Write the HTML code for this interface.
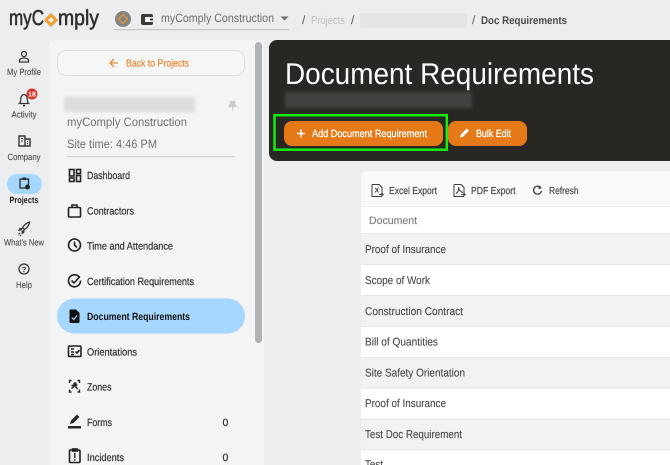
<!DOCTYPE html>
<html><head><meta charset="utf-8"><style>
html,body{margin:0;padding:0;width:670px;height:465px;overflow:hidden;background:#ebedef}
svg{display:block;filter:blur(.25px)}
text{font-family:"Liberation Sans",sans-serif;text-rendering:geometricPrecision}
.m{font-size:10.5px;fill:#2f3336;stroke:#2f3336;stroke-width:.2}
.r{font-size:9px;fill:#4a4e51;stroke:#4a4e51;stroke-width:.1;text-anchor:middle}
.t{font-size:11.3px;fill:#45494c;stroke:#45494c;stroke-width:.1}
.b{font-size:10.2px;fill:#45494c;stroke:#45494c;stroke-width:.2}
.w{font-size:10.5px;fill:#fff;stroke:#fff;stroke-width:.25}
.i{fill:none;stroke:#1f2224;stroke-width:1.600}
</style></head><body>
<svg width="670" height="465" viewBox="0 0 670 465" xmlns="http://www.w3.org/2000/svg">
<defs>
<filter id="bl" x="-10%" y="-40%" width="120%" height="180%"><feGaussianBlur stdDeviation="1.500"/></filter>
</defs>
<rect width="670" height="465" fill="#ebedef"/>

<!-- top bar -->
<text x="9" y="25" font-size="21.500" fill="#2e2e2e" stroke="#2e2e2e" stroke-width=".55" textLength="35" lengthAdjust="spacingAndGlyphs">myC</text>
<path d="M51 15l5 5-5 5-5-5z" fill="none" stroke="#f0a030" stroke-width="3"/>
<text x="58" y="25" font-size="21.500" fill="#2e2e2e" stroke="#2e2e2e" stroke-width=".55" textLength="41" lengthAdjust="spacingAndGlyphs">mply</text>
<circle cx="123" cy="19" r="8" fill="#85837f"/>
<path d="M123 14.500l4.500 4.500-4.500 4.500-4.500-4.500z" fill="none" stroke="#d99a3a" stroke-width="1.300"/>
<rect x="141" y="14" width="12" height="11" rx="2" fill="#3a3a3a"/>
<rect x="145" y="17" width="8" height="5" fill="#f4f4f4"/>
<rect x="150" y="18.500" width="3" height="2" fill="#3a3a3a"/>
<text x="161" y="22" font-size="12" fill="#6b6f72" textLength="113" lengthAdjust="spacingAndGlyphs">myComply Construction</text>
<path d="M280.500 16.500h8l-4 4z" fill="#6b6f72"/>
<rect x="114" y="29" width="175" height="1.200" fill="#c4c8cb"/>
<text x="302" y="24" font-size="12" fill="#55595c">/</text>
<text x="311" y="24" font-size="11.500" fill="#bdc0c3" textLength="34" lengthAdjust="spacingAndGlyphs">Projects</text>
<text x="351" y="24" font-size="12" fill="#55595c">/</text>
<rect x="360" y="13" width="107" height="15" rx="2" fill="#e3e5e7"/>
<text x="472" y="24" font-size="12" fill="#55595c">/</text>
<text x="481" y="24" font-size="11" font-weight="bold" fill="#474b4e" textLength="86" lengthAdjust="spacingAndGlyphs">Doc Requirements</text>

<!-- left rail -->
<g fill="none" stroke="#33373a" stroke-width="1.300">
<circle cx="24" cy="54" r="2.500"/><path d="M19.500 62v-1.500c0-1.500 2-2.500 4.500-2.500s4.500 1 4.500 2.500V62z"/>
<path d="M19.500 103.500c1.500-1.500 1-3.500 1.500-6 .5-2 2-3 3-3s2.500 1 3 3c.5 2.500 0 4.500 1.500 6z"/><path d="M23 105.500h2" stroke-width="1.500"/>
</g>
<circle cx="32" cy="94" r="5.500" fill="#d8352a"/>
<text x="32" y="96.500" font-size="7" fill="#fff" text-anchor="middle" font-weight="bold">18</text>
<path d="M19 146v-10h6v10zM25 146v-7h5v7z" fill="none" stroke="#33373a" stroke-width="1.400"/>
<path d="M21 138.500h2M21 141h2M27 141.500h1M27 143.500h1" stroke="#33373a"/>
<rect x="7" y="174" width="35" height="20" rx="10" fill="#a6d7ff"/>
<path d="M20 179h8.500v9h-8.500z" fill="none" stroke="#26292b" stroke-width="1.300"/><rect x="22.500" y="177.500" width="3.500" height="2.500" fill="#26292b"/><circle cx="27.500" cy="187" r="2.500" fill="#26292b"/>
<path d="M22.500 228c1.500-3 4-5 7-6-.5 3.500-2.500 6-5 7.500z" fill="none" stroke="#33373a" stroke-width="1.300"/>
<path d="M22.500 228l-3 .5-1 2 3-.2M24.500 229.500l-.5 3-2 1.500-.2-3" fill="#33373a" stroke="#33373a" stroke-width=".6"/>
<path d="M20 233l-1.500 1.500M21 235l-1 1" stroke="#33373a" stroke-width="1.200"/>
<circle cx="24" cy="269" r="5" fill="none" stroke="#33373a" stroke-width="1.300"/>
<text x="24" y="272" font-size="7.500" font-weight="bold" fill="#33373a" text-anchor="middle">?</text>
<text class="r" x="24" y="75" textLength="34" lengthAdjust="spacingAndGlyphs">My Profile</text>
<text class="r" x="24" y="117.500" textLength="25" lengthAdjust="spacingAndGlyphs">Activity</text>
<text class="r" x="24" y="160" textLength="33" lengthAdjust="spacingAndGlyphs">Company</text>
<text class="r" x="24" y="203" font-weight="bold" style="fill:#222;stroke:none" textLength="29" lengthAdjust="spacingAndGlyphs">Projects</text>
<text class="r" x="24" y="245.500" textLength="40" lengthAdjust="spacingAndGlyphs">What's New</text>
<text class="r" x="24" y="288" textLength="16" lengthAdjust="spacingAndGlyphs">Help</text>

<!-- side panel -->
<path d="M56 40H264V465H49V47a7 7 0 0 1 7-7z" fill="#f3f4f6"/>
<rect x="255" y="42" width="7" height="301" rx="3.500" fill="#b1b4b6"/>
<rect x="57.500" y="50.500" width="187" height="25" rx="9" fill="#f5f6f7" stroke="#dcdfe1"/>
<path d="M118 63h-7.500M114 59l-4 4 4 4" fill="none" stroke="#ec8a33" stroke-width="1.300"/>
<text x="126" y="66.500" font-size="10.300" fill="#e98731" stroke="#e98731" stroke-width=".2" textLength="63" lengthAdjust="spacingAndGlyphs">Back to Projects</text>
<rect x="64" y="97" width="131" height="15" fill="#dadcde" filter="url(#bl)"/>
<path d="M229 103h7l-1-1v-1h-5v1zM230 103l-2 4h9l-2-4zM232 107h1.400l-.7 6z" fill="#c9cbcd"/>
<text x="67" y="126" font-size="12.200" fill="#6d7174" textLength="120" lengthAdjust="spacingAndGlyphs">myComply Construction</text>
<text x="67" y="148" font-size="12.200" fill="#6d7174" textLength="90" lengthAdjust="spacingAndGlyphs">Site time: 4:46 PM</text>
<rect x="67" y="156" width="168" height="1.200" fill="#d3d6d8"/>
<rect x="57" y="298.500" width="188" height="35" rx="17.500" fill="#a6d7ff"/>

<!-- menu icons -->
<g class="i">
<rect x="69.500" y="169.500" width="4.500" height="6.500"/><rect x="76.500" y="169.500" width="4" height="4"/><rect x="69.500" y="178" width="4.500" height="3.500"/><rect x="76.500" y="175.500" width="4" height="6"/>
<rect x="68.500" y="207.500" width="12" height="9.500" rx="1"/><path d="M72 207.500v-2.500h5v2.500"/>
<circle cx="74.500" cy="245" r="6"/><path d="M74.500 241.500v3.500l2.500 2.500"/>
<path d="M79.500 277.500a6 6 0 1 0 1 3"/><path d="M71.500 280.500l2.500 2.500 6-6.500"/>
<rect x="68.500" y="346" width="12.500" height="10.500" rx="1"/><path d="M71 349h3M71 352h3M71 354.500h3M75.500 351.500l1.500 1.500 2.500-3"/>
<path d="M71.500 380.500h-2v2.500M77.500 380.500h2v2.500M71.500 392h-2v-2.500M77.500 392h2v-2.500" stroke-width="1.400"/>
<rect x="69.500" y="450" width="10.500" height="12.500" rx="1"/><rect x="72.500" y="449" width="4.500" height="2" fill="#26292b"/>
</g>
<path d="M69.500 310.500a1 1 0 0 1 1-1h5.500l3.500 3.500V322a1 1 0 0 1-1 1h-8a1 1 0 0 1-1-1z" fill="#111"/>
<path d="M71.800 317.500l2 2 3.300-4" fill="none" stroke="#a6d7ff" stroke-width="1.200"/>
<circle cx="75" cy="384" r="1.700" fill="#26292b"/><path d="M74.500 386l-3 2.500M75 386l2.500 3M71.500 385.500l6-.5" stroke="#26292b" stroke-width="1.500" fill="none"/>
<rect x="68" y="426" width="13" height="2.500" fill="#26292b"/>
<path d="M70 424l1-3.500 6-6 2.500 2.500-6 6z" fill="#26292b"/>
<path d="M74.800 453v5M74.800 459.300v1.500" stroke="#26292b" stroke-width="1.400"/>

<text class="m" x="87" y="179" textLength="43" lengthAdjust="spacingAndGlyphs">Dashboard</text>
<text class="m" x="87" y="214.500" textLength="47" lengthAdjust="spacingAndGlyphs">Contractors</text>
<text class="m" x="87" y="249.500" textLength="86" lengthAdjust="spacingAndGlyphs">Time and Attendance</text>
<text class="m" x="87" y="285" textLength="107" lengthAdjust="spacingAndGlyphs">Certification Requirements</text>
<text class="m" x="87" y="320" font-weight="bold" style="fill:#111;stroke:none" textLength="103" lengthAdjust="spacingAndGlyphs">Document Requirements</text>
<text class="m" x="87" y="355.500" textLength="50" lengthAdjust="spacingAndGlyphs">Orientations</text>
<text class="m" x="87" y="390.500" textLength="24.500" lengthAdjust="spacingAndGlyphs">Zones</text>
<text class="m" x="87" y="426" textLength="25" lengthAdjust="spacingAndGlyphs">Forms</text>
<text class="m" x="87" y="461" textLength="37" lengthAdjust="spacingAndGlyphs">Incidents</text>
<text class="m" x="222.500" y="426">0</text>
<text class="m" x="222.500" y="461">0</text>

<!-- dark header -->
<path d="M277 40H670V161H277a8 8 0 0 1-8-8V48a8 8 0 0 1 8-8z" fill="#282723"/>
<text x="285" y="84" font-size="30" fill="#fbfbfb" textLength="309" lengthAdjust="spacingAndGlyphs">Document Requirements</text>
<rect x="285" y="92" width="187" height="16" fill="#434340" filter="url(#bl)"/>
<rect x="274.500" y="115.200" width="172.300" height="34.500" fill="none" stroke="#14ee0a" stroke-width="2.500"/>
<rect x="284" y="121" width="159" height="25" rx="8" fill="#e57917"/>
<rect x="448" y="121" width="79" height="25" rx="8" fill="#e57917"/>
<path d="M301 129.500v8M297 133.500h8" stroke="#fff" stroke-width="1.400"/>
<text class="w" x="312" y="137" textLength="115" lengthAdjust="spacingAndGlyphs">Add Document Requirement</text>
<path d="M460 137.500l.8-3 6-6 2.200 2.200-6 6z" fill="#fff"/>
<text class="w" x="476" y="137" textLength="35" lengthAdjust="spacingAndGlyphs">Bulk Edit</text>

<!-- table -->
<path d="M367 171H670V465H361V177a6 6 0 0 1 6-6z" fill="#f8f9fa"/>
<rect x="361" y="207" width="309" height="27" fill="#fff"/>
<rect x="361" y="206" width="309" height="1" fill="#eceeef"/>
<rect x="361" y="233" width="309" height="1" fill="#e6e8ea"/>
<rect x="361" y="234" width="309" height="30.500" fill="#f1f2f4"/>
<rect x="361" y="264.500" width="309" height="30.500" fill="#fff"/>
<rect x="361" y="295" width="309" height="31" fill="#f1f2f4"/>
<rect x="361" y="326" width="309" height="31" fill="#fff"/>
<rect x="361" y="357" width="309" height="31" fill="#f1f2f4"/>
<rect x="361" y="388" width="309" height="30.500" fill="#fff"/>
<rect x="361" y="418.500" width="309" height="31" fill="#f1f2f4"/>
<rect x="361" y="449.500" width="309" height="16" fill="#fff"/>
<g fill="#e4e6e8">
<rect x="361" y="264" width="309" height="1"/><rect x="361" y="295" width="309" height="1"/><rect x="361" y="326" width="309" height="1"/><rect x="361" y="357" width="309" height="1"/><rect x="361" y="387.500" width="309" height="1"/><rect x="361" y="418.500" width="309" height="1"/><rect x="361" y="449" width="309" height="1"/>
</g>

<!-- toolbar -->
<g fill="none" stroke="#3a3e41" stroke-width="1">
<path d="M372 184.500h7l3 3v7M382 196.500h-10v-12"/><path d="M379 194.500h4M381.500 193l1.800 1.500-1.800 1.500"/>
<path d="M454 184.500h7l3 3v7M464 196.500h-10v-12"/><path d="M461 194.500h4M463.500 193l1.800 1.500-1.800 1.500"/><path d="M456 193.500c2-1 3-4 2.500-6.500.5 3 2 5 4.500 5.500"/>
<path d="M541 188a4 4 0 1 0 .5 3" stroke-width="1.300"/>
</g>
<text x="374.500" y="192.500" font-size="7" font-weight="bold" fill="#3a3e41">X</text>
<path d="M539.500 185.500l2 3-3.500.3z" fill="#3a3e41"/>
<text class="b" x="389" y="194" textLength="48" lengthAdjust="spacingAndGlyphs">Excel Export</text>
<text class="b" x="471" y="194" textLength="44.500" lengthAdjust="spacingAndGlyphs">PDF Export</text>
<text class="b" x="549" y="194" textLength="29.500" lengthAdjust="spacingAndGlyphs">Refresh</text>
<text x="369" y="224" font-size="10.800" fill="#7a7d80" stroke="#7a7d80" stroke-width=".15" textLength="48" lengthAdjust="spacingAndGlyphs">Document</text>
<text class="t" x="365" y="253" textLength="81" lengthAdjust="spacingAndGlyphs">Proof of Insurance</text>
<text class="t" x="365" y="284" textLength="65" lengthAdjust="spacingAndGlyphs">Scope of Work</text>
<text class="t" x="365" y="315" textLength="98" lengthAdjust="spacingAndGlyphs">Construction Contract</text>
<text class="t" x="365" y="345.500" textLength="73" lengthAdjust="spacingAndGlyphs">Bill of Quantities</text>
<text class="t" x="365" y="376.500" textLength="100" lengthAdjust="spacingAndGlyphs">Site Safety Orientation</text>
<text class="t" x="365" y="407" textLength="81" lengthAdjust="spacingAndGlyphs">Proof of Insurance</text>
<text class="t" x="365" y="438" textLength="97" lengthAdjust="spacingAndGlyphs">Test Doc Requirement</text>
<text class="t" x="365" y="468" textLength="18" lengthAdjust="spacingAndGlyphs">Test</text>
</svg>
</body></html>
